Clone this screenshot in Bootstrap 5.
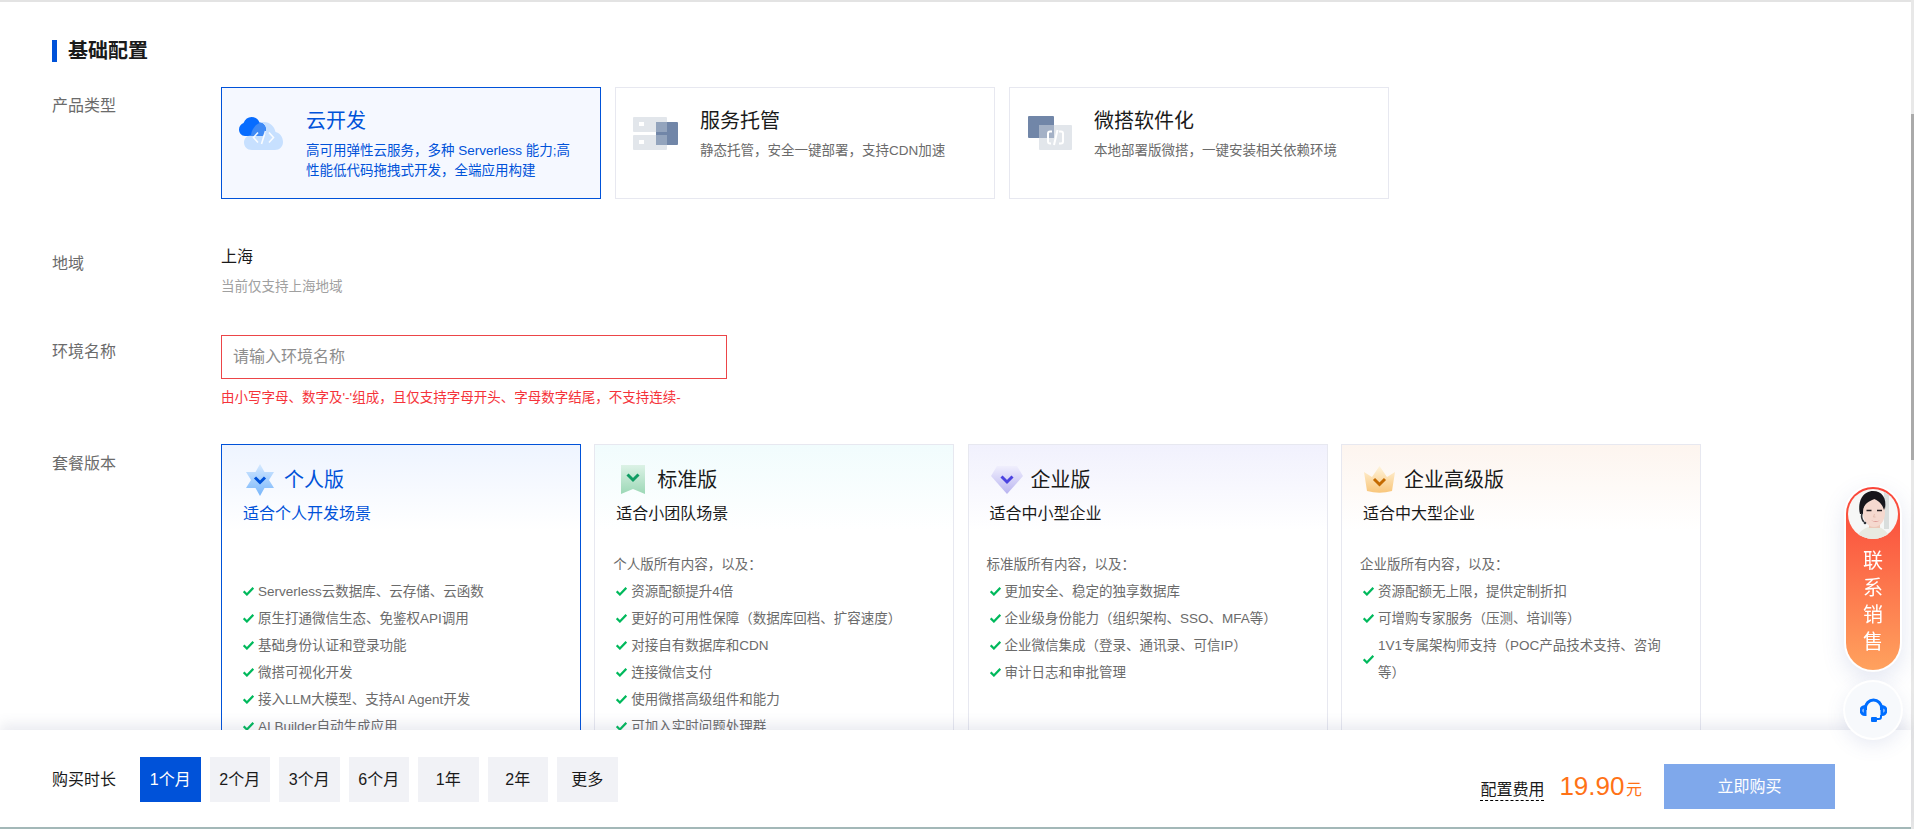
<!DOCTYPE html>
<html lang="zh-CN">
<head>
  <meta charset="UTF-8">
  <title>基础配置</title>
  <link href="https://cdn.jsdelivr.net/npm/bootstrap@5.3.3/dist/css/bootstrap.min.css" rel="stylesheet">
  <style>
    body { font-family: "Liberation Sans", "Noto Sans CJK SC", sans-serif; color: #000; background: #fff; }
    .app { height: 100vh; min-width: 0; }
    .page-main { border-top: 2px solid #e3e3e3; padding: 38px 0 0 52px; overflow: hidden; }

    .section-title { font-size: 20px; line-height: 22px; font-weight: 700; color: #1a1a1a; border-left: 5px solid #0052d9; padding-left: 11px; margin: 0 0 25px; }
    .cfg-row { display: flex; }
    .cfg-label { width: 169px; flex: none; font-size: 16px; line-height: 24px; padding-top: 7px; color: #6b6b6b; }
    .cfg-label.tight { padding-top: 5px; }
    .region-row { margin-top: 46px; }
    .env-row { margin-top: 38px; }
    .plan-row { margin-top: 36px; }
    .plan-row .cfg-label { padding-top: 8px; }

    .type-list { gap: 14px; }
    .type-card { width: 380px; height: 112px; border-color: #e7e8f0; padding: 19px 20px 0 17px; }
    .type-card.active { background: #f5f8ff; border-color: #0052d9; }
    .type-card .type-icon { width: 67px; flex: none; padding-top: 9px; }
    .type-title { font-size: 20px; line-height: 28px; color: #1a1a1a; font-weight: 400; margin: 0 0 6px; }
    .type-desc { font-size: 13.5px; line-height: 20px; color: #6b6b6b; margin: 0; }
    .type-card.active .type-title, .type-card.active .type-desc { color: #0052d9; }

    .region-name { font-size: 16px; line-height: 24px; color: #1a1a1a; }
    .region-hint { font-size: 13.5px; line-height: 20px; color: #a0a0a0; margin-top: 8px; }

    .env-input { width: 506px; height: 44px; padding: 0 11px; font-size: 16px; border: 1px solid #ec4548; }
    .env-input::placeholder { color: #8d8d8d; }
    .env-error { font-size: 13.5px; line-height: 20px; color: #f5333a; margin-top: 9px; }

    .plan-list-wrap { gap: 13.3px; }
    .plan-card { width: 360px; height: 420px; border-color: #e7e8f0; padding: 20px 0 0 0; }
    .plan-card.active { border-color: #0052d9; }
    .plan-card.blue { background: linear-gradient(#eef4ff, #fff 86px); }
    .plan-card.green { background: linear-gradient(#f1fcfd, #fff 86px); }
    .plan-card.purple { background: linear-gradient(#f1f1fd, #fff 86px); }
    .plan-card.orange { background: linear-gradient(#fdf5ef, #fff 86px); }
    .plan-head { height: 29px; }
    .plan-icon { width: 40px; margin-left: 18px; margin-right: 4px; flex: none; }
    .plan-icon svg { display: block; margin: 0 auto; }
    .plan-title { font-size: 20px; line-height: 28px; font-weight: 400; margin: 0; color: #1a1a1a; }
    .plan-sub { font-size: 16px; line-height: 24px; margin: 8px 0 0 21px; color: #1a1a1a; }
    .plan-card.active .plan-title, .plan-card.active .plan-sub { color: #0052d9; }
    .plan-intro { font-size: 13.5px; line-height: 27px; height: 27px; margin: 25px 0 0 18px; color: #6b6b6b; }
    .plan-list { list-style: none; margin: 0; padding: 0 30px 0 21px; font-size: 13.5px; line-height: 27px; color: #6b6b6b; }
    .plan-list li { display: flex; align-items: center; }
    .plan-list svg { flex: none; width: 11px; height: 9px; margin-right: 4px; }

    .page-footer { height: 99px; flex: none; background: #fff; border-bottom: 2px solid #a3b8b8; padding: 0 76px 0 52px; box-shadow: 0 -6px 12px rgba(90, 100, 140, .12); position: relative; }
    .term-label { font-size: 16px; line-height: 45px; margin-right: 15px; color: #1a1a1a; }
    .term-group { padding-top: 27px; gap: 9px; }
    .term-btn { width: 60.5px; height: 45px; padding: 0; font-size: 16px; background: #f1f2f6; color: #1a1a1a; border: 0; }
    .term-btn.active { background: #0052d9; color: #fff; }
    .fee-group { padding-top: 34px; }
    .fee-summary { padding-top: 9px; }
    .fee-label { font-size: 16px; line-height: 20px; border-bottom: 1px dashed #000; color: #1a1a1a; }
    .fee-price { font-size: 26px; line-height: 1; color: #ff7216; margin-left: 15px; }
    .fee-unit { font-size: 16px; color: #ff7216; margin: 0 22px 0 1.5px; }
    .buy-btn { width: 171px; height: 45px; padding: 0; font-size: 16px; background: #7fa8eb; color: #fff; border: 0; }

    .page-scroll { width: 3px; flex: none; background: #e8e8e8; }
    .page-scroll div { margin-top: 114px; height: 346px; background: #aaa; }

    .side-float { position: fixed; top: 487px; right: 13px; width: 56px; z-index: 5; gap: 12px; }
    .sales-pill { width: 54px; height: 183px; border-radius: 27px; padding: 2px 2px 0; background: linear-gradient(#fa4338, #ffa25e); box-shadow: 0 0 0 2px #fff, 0 8px 24px rgba(80, 100, 170, .18); color: #fff; }
    .sales-pill svg { display: block; width: 50px; height: 50px; }
    .sales-text { font-size: 20px; line-height: 27px; margin-top: 9px; width: 20px; text-align: center; }
    .help-btn { width: 56px; height: 56px; background: #f7f9fc; box-shadow: 0 0 0 2px #fff, 0 6px 20px rgba(80, 100, 170, .15); }
  </style>
</head>
<body class="d-flex overflow-hidden">

  <div class="app flex-grow-1 d-flex flex-column">
    <main class="page-main flex-grow-1">
      <h2 class="section-title">基础配置</h2>

      <!-- 产品类型 -->
      <div class="cfg-row">
        <div class="cfg-label">产品类型</div>
        <div class="d-flex type-list">
          <div class="card rounded-0 flex-row type-card active">
            <div class="type-icon">
              <svg width="48" height="36" viewBox="0 0 48 36">
                <defs>
                  <clipPath id="darkCloud"><path d="M6 19C2.500 19 0 16 0 12.500 0 9.500 2 7 4.500 6 6 2 9 0 12.500 0 16 0 19 2 20.500 5.500 24.500 6 27 9 27 13 27 16 25 19 22 19Z"/></clipPath>
                </defs>
                <g transform="translate(0 1)">
                  <path d="M13 33C8 33 5 29.500 5 25.500 5 21.500 8 18.500 12 18 13 10 19 5 25 5 31 5 35.500 9.500 36.500 15 41 16 44 20 44 25 44 29.500 40.500 33 36 33Z" fill="#c7e0ff"/>
                  <path d="M6 19C2.500 19 0 16 0 12.500 0 9.500 2 7 4.500 6 6 2 9 0 12.500 0 16 0 19 2 20.500 5.500 24.500 6 27 9 27 13 27 16 25 19 22 19Z" fill="#076cff"/>
                  <g clip-path="url(#darkCloud)">
                    <path d="M13 33C8 33 5 29.500 5 25.500 5 21.500 8 18.500 12 18 13 10 19 5 25 5 31 5 35.500 9.500 36.500 15 41 16 44 20 44 25 44 29.500 40.500 33 36 33Z" fill="#3f8af5"/>
                  </g>
                  <path d="M19 15.500l-4.500 5 4.500 5M30 15.500l4.500 5-4.500 5M26.500 14l-4 13" fill="none" stroke="#fff" stroke-width="1.600" stroke-opacity=".9"/>
                </g>
              </svg>
            </div>
            <div>
              <h3 class="type-title">云开发</h3>
              <p class="type-desc">高可用弹性云服务，多种 Serverless 能力;高性能低代码拖拽式开发，全端应用构建</p>
            </div>
          </div>
          <div class="card rounded-0 flex-row type-card">
            <div class="type-icon">
              <svg width="48" height="36" viewBox="0 0 48 36">
                <rect y="1" width="34" height="15" rx="1" fill="#e2e6eb"/>
                <rect y="19" width="34" height="15" rx="1" fill="#e2e6eb"/>
                <rect x="6" y="6" width="5" height="4" fill="#fff"/>
                <rect x="6" y="24" width="5" height="4" fill="#fff"/>
                <rect x="23" y="6" width="22" height="23" rx="1" fill="#7186a8"/>
                <rect x="23" y="6" width="11" height="10" fill="#93a4bd"/>
                <rect x="23" y="19" width="11" height="10" fill="#93a4bd"/>
              </svg>
            </div>
            <div>
              <h3 class="type-title">服务托管</h3>
              <p class="type-desc">静态托管，安全一键部署，支持CDN加速</p>
            </div>
          </div>
          <div class="card rounded-0 flex-row type-card">
            <div class="type-icon">
              <svg width="48" height="36" viewBox="0 0 48 36">
                <rect x="1" width="26" height="22" rx="1" fill="#7186a8"/>
                <rect x="12" y="9" width="33" height="25" rx="1" fill="#e2e6eb"/>
                <rect x="12" y="9" width="15" height="13" fill="#a4b1c6"/>
                <path d="M25 15.500h-2a2 2 0 0 0-2 2v8a2 2 0 0 0 2 2h1M32 15.500h2a2 2 0 0 1 2 2v8a2 2 0 0 1-2 2h-2M30.500 14l-3.500 15" fill="none" stroke="#fff" stroke-width="2"/>
              </svg>
            </div>
            <div>
              <h3 class="type-title">微搭软件化</h3>
              <p class="type-desc">本地部署版微搭，一键安装相关依赖环境</p>
            </div>
          </div>
        </div>
      </div>

      <!-- 地域 -->
      <div class="cfg-row region-row">
        <div class="cfg-label">地域</div>
        <div>
          <div class="region-name">上海</div>
          <div class="region-hint">当前仅支持上海地域</div>
        </div>
      </div>

      <!-- 环境名称 -->
      <div class="cfg-row env-row">
        <div class="cfg-label tight">环境名称</div>
        <div>
          <input class="form-control rounded-0 env-input" type="text" placeholder="请输入环境名称">
          <div class="env-error">由小写字母、数字及'-'组成，且仅支持字母开头、字母数字结尾，不支持连续-</div>
        </div>
      </div>

      <!-- 套餐版本 -->
      <div class="cfg-row plan-row">
        <div class="cfg-label">套餐版本</div>
        <div class="d-flex plan-list-wrap">
          <div class="card rounded-0 plan-card blue active">
            <div class="d-flex align-items-center plan-head">
              <div class="plan-icon">
                <svg width="28" height="32" viewBox="0 0 28 32">
                  <defs><linearGradient id="gStar" x1="0" y1="0" x2="0" y2="1"><stop offset="0" stop-color="#d5e9ff"/><stop offset="1" stop-color="#78b6fb"/></linearGradient></defs>
                  <polygon points="14,0 18.500,8 28,8 23,16 28,24 18.500,24 14,32 9.500,24 0,24 5,16 0,8 9.500,8" fill="url(#gStar)"/>
                  <path d="M9 13.500l5 5 5-5" fill="none" stroke="#0052d9" stroke-width="3"/>
                </svg>
              </div>
              <h3 class="plan-title">个人版</h3>
            </div>
            <p class="plan-sub">适合个人开发场景</p>
            <p class="plan-intro"></p>
            <ul class="plan-list" data-items="Serverless云数据库、云存储、云函数|原生打通微信生态、免鉴权API调用|基础身份认证和登录功能|微搭可视化开发|接入LLM大模型、支持AI Agent开发|AI Builder自动生成应用"></ul>
          </div>

          <div class="card rounded-0 plan-card green">
            <div class="d-flex align-items-center plan-head">
              <div class="plan-icon">
                <svg width="24" height="29" viewBox="0 0 24 29">
                  <defs><linearGradient id="gBook" x1="0" y1="0" x2="0" y2="1"><stop offset="0" stop-color="#dcf2e6"/><stop offset="1" stop-color="#9cd8b6"/></linearGradient></defs>
                  <polygon points="0,0 24,0 24,29 12,24 0,29" fill="url(#gBook)"/>
                  <path d="M6.500 9.500l5.500 5.500 5.500-5.500" fill="none" stroke="#0e9c62" stroke-width="3"/>
                </svg>
              </div>
              <h3 class="plan-title">标准版</h3>
            </div>
            <p class="plan-sub">适合小团队场景</p>
            <p class="plan-intro">个人版所有内容，以及：</p>
            <ul class="plan-list" data-items="资源配额提升4倍|更好的可用性保障（数据库回档、扩容速度）|对接自有数据库和CDN|连接微信支付|使用微搭高级组件和能力|可加入实时问题处理群"></ul>
          </div>

          <div class="card rounded-0 plan-card purple">
            <div class="d-flex align-items-center plan-head">
              <div class="plan-icon">
                <svg width="32" height="28" viewBox="0 0 32 28">
                  <defs><linearGradient id="gGem" x1="0" y1="0" x2="0" y2="1"><stop offset="0" stop-color="#f0effd"/><stop offset="1" stop-color="#b9b4f0"/></linearGradient></defs>
                  <polygon points="6,0 26,0 32,10 16,28 0,10" fill="url(#gGem)"/>
                  <path d="M10.500 10.500l5.500 5.500 5.500-5.500" fill="none" stroke="#4b43e0" stroke-width="3"/>
                </svg>
              </div>
              <h3 class="plan-title">企业版</h3>
            </div>
            <p class="plan-sub">适合中小型企业</p>
            <p class="plan-intro">标准版所有内容，以及：</p>
            <ul class="plan-list" data-items="更加安全、稳定的独享数据库|企业级身份能力（组织架构、SSO、MFA等）|企业微信集成（登录、通讯录、可信IP）|审计日志和审批管理"></ul>
          </div>

          <div class="card rounded-0 plan-card orange">
            <div class="d-flex align-items-center plan-head">
              <div class="plan-icon">
                <svg width="31" height="27" viewBox="0 0 31 27">
                  <defs><linearGradient id="gCrown" x1="0" y1="0" x2="0" y2="1"><stop offset="0" stop-color="#fff4dc"/><stop offset="1" stop-color="#f9c67a"/></linearGradient></defs>
                  <path d="M0 6l8 5 7.500-11 7.500 11 8-5-3 19q-12.500 3.500-25 0z" fill="url(#gCrown)"/>
                  <path d="M10 13l5.500 5.500 5.500-5.500" fill="none" stroke="#c46a00" stroke-width="3"/>
                </svg>
              </div>
              <h3 class="plan-title">企业高级版</h3>
            </div>
            <p class="plan-sub">适合中大型企业</p>
            <p class="plan-intro">企业版所有内容，以及：</p>
            <ul class="plan-list" data-items="资源配额无上限，提供定制折扣|可增购专家服务（压测、培训等）|1V1专属架构师支持（POC产品技术支持、咨询等）"></ul>
          </div>
        </div>
      </div>
    </main>

    <footer class="page-footer d-flex justify-content-between align-items-start">
      <div class="d-flex term-group">
        <span class="term-label">购买时长</span>
        <button class="btn rounded-0 term-btn active">1个月</button>
        <button class="btn rounded-0 term-btn">2个月</button>
        <button class="btn rounded-0 term-btn">3个月</button>
        <button class="btn rounded-0 term-btn">6个月</button>
        <button class="btn rounded-0 term-btn">1年</button>
        <button class="btn rounded-0 term-btn">2年</button>
        <button class="btn rounded-0 term-btn">更多</button>
      </div>
      <div class="d-flex align-items-start fee-group">
        <div class="d-flex align-items-baseline fee-summary">
          <span class="fee-label">配置费用</span>
          <span class="fee-price">19.90</span>
          <span class="fee-unit">元</span>
        </div>
        <button class="btn rounded-0 buy-btn">立即购买</button>
      </div>
    </footer>
  </div>

  <div class="page-scroll"><div></div></div>

  <!-- 悬浮客服 -->
  <div class="side-float d-flex flex-column align-items-center">
    <div class="sales-pill d-flex flex-column align-items-center">
      <svg viewBox="0 0 50 50">
        <defs>
          <clipPath id="avatarClip"><circle cx="25" cy="25" r="25"/></clipPath>
          <filter id="soft" x="-5%" y="-5%" width="110%" height="110%"><feGaussianBlur stdDeviation=".45"/></filter>
        </defs>
        <g clip-path="url(#avatarClip)">
          <rect width="50" height="50" fill="#f6f7f6"/>
          <g filter="url(#soft)">
            <rect x="36" width="5" height="40" fill="#d9dedd"/>
            <path d="M9 50c1-8 8-12 17-13 8 1 14 5 16 13z" fill="#e8eae0"/>
            <rect x="21" y="31" width="11" height="8" fill="#ecc8b8"/>
            <path d="M12 25C9 11 16 2 25 2s14 7 12 18l-2 2c-1-6-4-10-8-11-5 2-9 4-11 8l-1 6z" fill="#16171c"/>
            <ellipse cx="26" cy="24" rx="11" ry="14" fill="#f5d9cf"/>
            <path d="M14.500 21c1-6 7-9 12-11 4 2 8 5 9.500 11 1-9-4-15-11-15S13 11 14.500 21z" fill="#16171c"/>
            <path d="M18.500 21.500h5M29 21.500h5" stroke="#2b2425" stroke-width="1.300"/>
            <path d="M23 31q5 3 9 0-4 4-9 0z" fill="#c8605f"/>
            <path d="M26.500 25l-1 3h2" fill="none" stroke="#e0b3a5" stroke-width=".7"/>
            <path d="M14 24c-1 4 0 7 2 9" fill="none" stroke="#33343a" stroke-width="1.600"/>
            <circle cx="17" cy="34" r="1.300" fill="#33343a"/>
          </g>
        </g>
      </svg>
      <div class="sales-text">联系销售</div>
    </div>
    <div class="help-btn rounded-circle d-flex align-items-center justify-content-center">
      <svg width="27" height="25" viewBox="0 0 27 25">
        <path d="M5.500 12V10a8 8 0 0 1 16 0v2" fill="none" stroke="#006eff" stroke-width="3"/>
        <path d="M5 8.500v8a4 4 0 0 1 0-8zM22 8.500v8a4 4 0 0 0 0-8z" fill="none" stroke="#006eff" stroke-width="3"/>
        <path d="M21 17v2a2 2 0 0 1-2 2h-3" fill="none" stroke="#006eff" stroke-width="2"/>
        <rect x="11" y="19" width="6" height="5" rx="1" fill="#006eff"/>
      </svg>
    </div>
  </div>

  <script src="https://cdn.jsdelivr.net/npm/bootstrap@5.3.3/dist/js/bootstrap.bundle.min.js"></script>
  <script>
    const CHECK_ICON = '<svg viewBox="0 0 11 9"><path d="M.7 4.300l3.200 3.200 6.400-6.700" fill="none" stroke="#00b95c" stroke-width="2.200"/></svg>';

    document.querySelectorAll('.plan-list').forEach(lista => {
      lista.dataset.items.split('|').forEach(item => {
        lista.innerHTML += `<li>${CHECK_ICON}<span>${item}</span></li>`;
      });
    });
  </script>
</body>
</html>
